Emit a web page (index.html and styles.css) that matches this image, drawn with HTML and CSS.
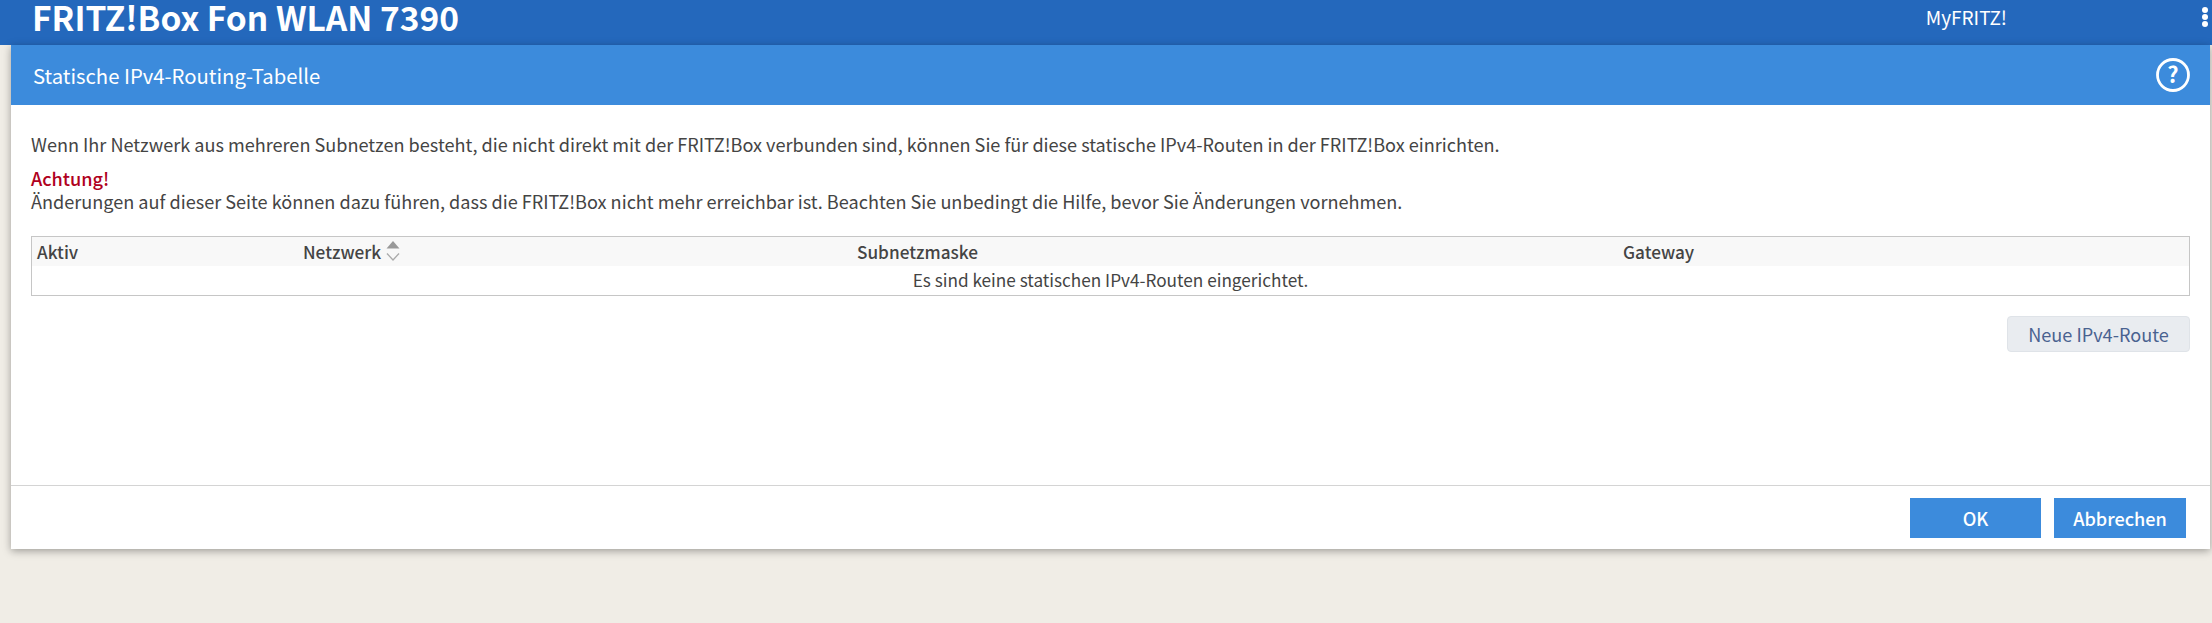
FILE: index.html
```html
<!DOCTYPE html>
<html lang="de">
<head>
<meta charset="utf-8">
<title>FRITZ!Box</title>
<link rel="stylesheet" href="styles.css">
</head>
<body>
<header class="topbar">
  <div class="brand">FRITZ!Box Fon WLAN 7390</div>
  <div class="myfritz">MyFRITZ!</div>
  <div class="dots"><i></i><i></i><i></i></div>
</header>
<main class="panel">
  <div class="panel-head">
    <h1>Statische IPv4-Routing-Tabelle</h1>
    <svg class="help" width="36" height="36" viewBox="0 0 36 36">
      <circle cx="18" cy="18" r="15.5" fill="none" stroke="#fff" stroke-width="2.8"/>
      <text x="18" y="25.5" text-anchor="middle" class="help-q">?</text>
    </svg>
  </div>
  <div class="content">
    <p class="intro">Wenn Ihr Netzwerk aus mehreren Subnetzen besteht, die nicht direkt mit der FRITZ!Box verbunden sind, können Sie für diese statische IPv4-Routen in der FRITZ!Box einrichten.</p>
    <p class="warn-title">Achtung!</p>
    <p class="warn-text">Änderungen auf dieser Seite können dazu führen, dass die FRITZ!Box nicht mehr erreichbar ist. Beachten Sie unbedingt die Hilfe, bevor Sie Änderungen vornehmen.</p>
    <div class="table">
      <div class="thead">
        <span class="c1">Aktiv</span>
        <span class="c2">Netzwerk
          <svg class="sort" width="14" height="20" viewBox="0 0 14 20">
            <path d="M7 0 13.500 7.500H.5Z" fill="#999"/>
            <path d="M1 12.500 7 19 13 12.500" fill="none" stroke="#aaa" stroke-width="1.300"/>
          </svg>
        </span>
        <span class="c3">Subnetzmaske</span>
        <span class="c4">Gateway</span>
      </div>
      <div class="tbody">Es sind keine statischen IPv4-Routen eingerichtet.</div>
    </div>
    <div class="table-actions"><button class="btn-light">Neue IPv4-Route</button></div>
  </div>
  <div class="panel-foot">
    <button class="btn-primary btn-ok">OK</button>
    <button class="btn-primary btn-cancel">Abbrechen</button>
  </div>
</main>
</body>
</html>
```
FILE: styles.css
```css
* { box-sizing: border-box; }
html, body { margin: 0; height: 623px; overflow: hidden; }
body {
  background: #f0ede6;
  font-family: "Noto Sans CJK SC", "Source Sans Pro", "Noto Sans", sans-serif;
  font-size: 18.1px;
  color: #444;
}
.topbar {
  height: 45px;
  background: #2468bc;
  color: #fff;
  display: flex;
  align-items: flex-start;
}
.brand {
  margin-left: 32px;
  font-size: 33.5px;
  font-weight: 700;
  line-height: 33px;
}
.myfritz {
  margin-left: auto;
  margin-right: 195px;
  font-size: 19px;
  line-height: 24px;
  margin-top: 5px;
}
.dots {
  display: flex;
  flex-direction: column;
  gap: 1px;
  margin-right: 4px;
  margin-top: 7px;
}
.dots i { width: 6px; height: 6px; border-radius: 50%; background: #fff; display: block; }
.panel {
  margin-left: 11px;
  width: 2199px;
  height: 504px;
  background: #fff;
  box-shadow: 0 2px 8px rgba(0, 0, 0, .35);
  display: flex;
  flex-direction: column;
}
.panel-head {
  height: 60px;
  flex: none;
  background: #3c8bdc;
  color: #fff;
  display: flex;
  align-items: center;
  justify-content: space-between;
  padding: 0 19px 0 22px;
}
.panel-head h1 { margin: 0; font-size: 20.3px; font-weight: 400; }
.help-q { font: 700 22px "Noto Sans CJK SC", sans-serif; fill: #fff; }
.content { flex: 1; padding: 27px 20px 0; }
.content p { margin: 0; line-height: 24px; }
.warn-title { color: #b00020; font-weight: 500; margin-top: 10px !important; }
.warn-text { margin-top: -1px !important; }
.table {
  margin-top: 23px;
  height: 60px;
  width: 2159px;
  border: 1px solid #c6c6c6;
  font-size: 17.2px;
}
.thead {
  height: 29px;
  background: #f8f8f8;
  display: flex;
  align-items: center;
  font-weight: 500;
  line-height: 26px;
}
.thead span { display: flex; align-items: center; gap: 5px; }
.c1 { width: 266px; padding-left: 5px; }
.c2 { width: 559px; padding-left: 5px; }
.c3 { width: 766px; }
.tbody { height: 29px; line-height: 28px; text-align: center; }
.sort { flex: none; margin-top: -1px; }
.table-actions { display: flex; justify-content: flex-end; margin-top: 20px; }
button { font: inherit; cursor: pointer; }
.btn-light {
  width: 183px;
  height: 36px;
  background: #e9ecf0;
  border: 1px solid #dfe3e8;
  border-radius: 4px;
  color: #4a6290;
  padding: 0;
}
.panel-foot {
  height: 64px;
  flex: none;
  border-top: 1px solid #d4d4d4;
  display: flex;
  justify-content: flex-end;
  align-items: flex-start;
  gap: 13px;
  padding: 12px 24px 0 0;
}
.btn-primary {
  height: 40px;
  border: 0;
  background: #3c8bdc;
  color: #fff;
  font-weight: 500;
  padding: 0;
}
.btn-ok { width: 131px; }
.btn-cancel { width: 132px; }
```
